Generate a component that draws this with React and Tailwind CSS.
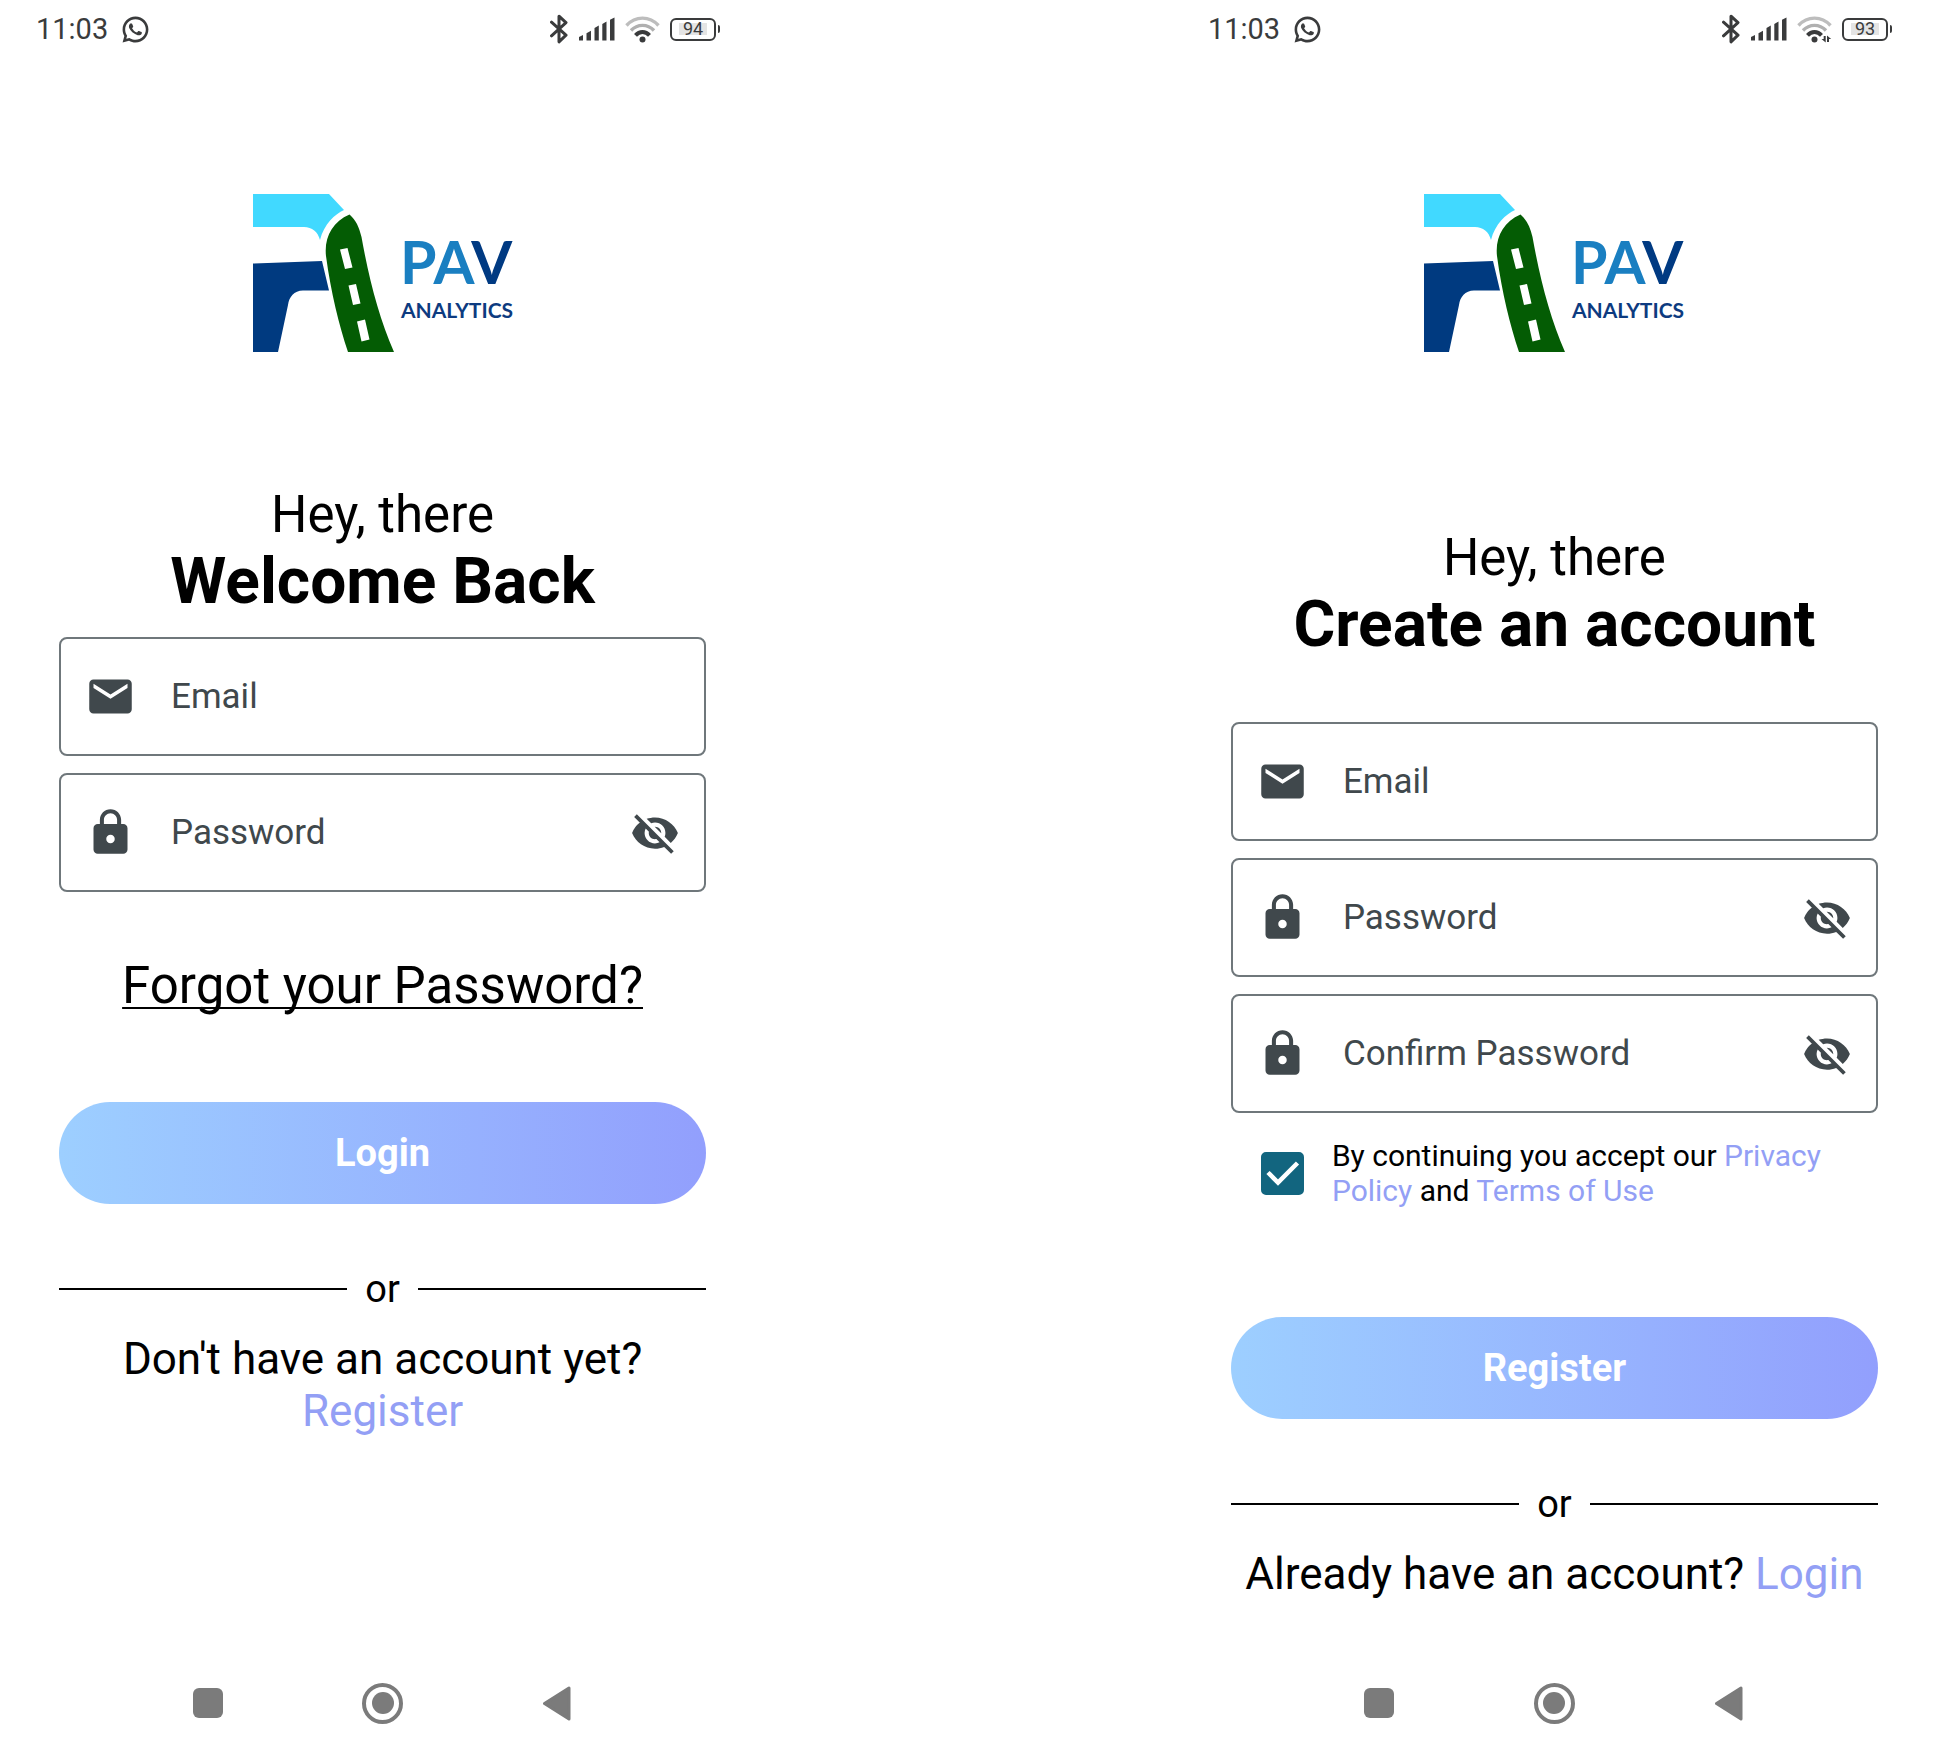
import { useState } from "react";
import { MdEmail, MdLock, MdVisibility, MdVisibilityOff } from "react-icons/md";
import { RiWhatsappLine } from "react-icons/ri";

function StatusBar({ battery, transferring }) {
  return (
    <header className="flex h-[58px] items-center justify-between pl-9 pr-[45px] text-[#3a3b3c]">
      <div className="flex items-center gap-3">
        <span className="text-[29px] leading-8">11:03</span>
        <RiWhatsappLine className="size-[31px]" aria-label="WhatsApp" />
      </div>
      <div className="flex items-center gap-[10px]">
        <svg className="h-[30px] w-[18px]" viewBox="0 0 18 30" fill="none" stroke="currentColor" strokeWidth="3" strokeLinejoin="round" strokeLinecap="round" aria-label="Bluetooth">
          <path d="M1.5 8.2 16 21.2 9 27.8V2.2L16 8.6 1.5 21.8" />
        </svg>
        <svg className="h-6 w-[37px]" viewBox="0 0 37 24" fill="currentColor" aria-label="Signal">
          <path d="M1 20 5 18V23.5H1ZM8.5 16.2 13 13.8V23.5H8.5ZM16.5 11 20.8 8.6V23.5H16.5ZM24.3 7 28.5 4.6V23.5H24.3ZM32 2.8 36.5 0.5V23.5H32Z" />
        </svg>
        <svg className="h-7 w-[35px]" viewBox="0 0 35 28" fill="none" stroke="currentColor" strokeWidth="3.4" aria-label="Wi-Fi">
          <path d="M1.5 10.5C10.5 0.7 24.5 0.7 33.5 10.5" stroke="#bdbdbd" />
          <path d="M6 15.5C12.5 8.6 22.5 8.6 29 15.5" stroke="#b0b0b0" />
          <path d="M10.5 20.3C14.5 15.9 20.5 15.9 24.5 20.3" strokeWidth="4" />
          <circle cx="17.5" cy="24.5" r="3" fill="currentColor" stroke="none" />
          {transferring && (
            <g fill="currentColor" stroke="none">
              <path d="M26.7 21H28.700V27.500L24.500 24H26.700Z" />
              <path d="M30 20.500 34.200 24H32V27H30Z" />
            </g>
          )}
        </svg>
        <div className="flex items-center gap-0.5">
          <div className="flex h-[23px] w-[46px] items-center justify-center rounded-md border-2 border-current">
            <span className="bg-[#e4e4e4] px-1 text-[18px] leading-3">{battery}</span>
          </div>
          <div className="h-2 w-0.5 rounded-r bg-current" />
        </div>
      </div>
    </header>
  );
}

function Logo() {
  return (
    <svg className="mx-auto h-[160px] w-[260px] overflow-visible" viewBox="253 194 260 160" role="img" aria-label="PAV Analytics">
      <path d="M253 194H329L344 210C335 214 324 224 320 240C318 232 312 227 304 227H253Z" fill="#41d9ff" />
      <path d="M253 263.5 322 261 329 290.5H303C294 290.5 289 297 288 305L278 352H253Z" fill="#003a80" />
      <path d="M349.5 214.5C356 220 359 227 361.5 237C369 279 379 318 394 352H348C339 325 331 293 326 256C324 238 332 222 349.5 214.5Z" fill="#045c04" />
      <path d="M340 249.5 347.5 248 352.5 267.5 345 269ZM348.5 285.5 356 284 360.5 303.5 353 305ZM357 321.5 365 319.5 369.5 339.5 361.5 341.5Z" fill="#fff" />
      <text x="400" y="284" fontFamily="Lato, sans-serif" fontWeight="700" fontSize="59" fill="#1a7fc1">
        PA<tspan fill="#003a82">V</tspan>
      </text>
      <text x="401" y="318" fontFamily="Lato, sans-serif" fontWeight="700" fontSize="21" fill="#0d3b80">
        ANALYTICS
      </text>
    </svg>
  );
}

function Heading({ title }) {
  return (
    <h1 className="text-center text-black">
      <span className="block text-[51px] leading-[60px]">Hey, there</span>
      <span className="block text-[64px] font-bold leading-[74px]">{title}</span>
    </h1>
  );
}

function Field({ id, label, icon: Icon, secret }) {
  const [visible, setVisible] = useState(false);
  const Eye = visible ? MdVisibility : MdVisibilityOff;
  return (
    <div className="flex h-[119px] items-center rounded-lg border-2 border-[#6f777b] pl-6 pr-6 text-[#40484c]">
      <label htmlFor={id} className="mr-[35px] shrink-0">
        <Icon className="size-[51px]" aria-label={label} />
      </label>
      <input
        id={id}
        type={secret && !visible ? "password" : "text"}
        placeholder={label}
        className="h-full min-w-0 flex-1 bg-transparent text-[35px] outline-none placeholder:text-[#40484c]"
      />
      {secret && (
        <button type="button" aria-label="Toggle visibility" onClick={() => setVisible(!visible)}>
          <Eye className="size-[50px]" />
        </button>
      )}
    </div>
  );
}

function GradientButton({ children }) {
  return (
    <button type="submit" className="h-[102px] w-full rounded-full bg-linear-to-r from-[#9dcfff] to-[#929ffd] text-[38px] font-bold text-white">
      {children}
    </button>
  );
}

function Divider() {
  return (
    <div className="mt-[61px] flex items-center gap-[18px] text-black">
      <div className="h-0.5 flex-1 bg-black" />
      <span className="text-[38px] leading-[48px]">or</span>
      <div className="h-0.5 flex-1 bg-black" />
    </div>
  );
}

function SwitchLine({ question, action }) {
  return (
    <p className="mt-5 text-center text-[44px] leading-[52px] text-black">
      {question} <a href="#" className="text-[#939ff5]">{action}</a>
    </p>
  );
}

function NavBar() {
  return (
    <nav className="mt-auto flex h-[100px] items-center justify-center gap-[127px] text-[#7b7b7b]">
      <button type="button" aria-label="Recents" className="flex w-12 justify-center">
        <span className="size-[30px] rounded-md bg-current" />
      </button>
      <button type="button" aria-label="Home" className="flex w-12 justify-center">
        <span className="flex size-[41px] items-center justify-center rounded-full border-4 border-current">
          <span className="size-[22px] rounded-full bg-current" />
        </span>
      </button>
      <button type="button" aria-label="Back" className="flex w-12 justify-center">
        <svg className="h-[35px] w-[29px]" viewBox="0 0 29 35" fill="currentColor" stroke="currentColor" strokeWidth="3" strokeLinejoin="round">
          <path d="M1.5 17.5 26 2V33Z" />
        </svg>
      </button>
    </nav>
  );
}

function Phone({ battery, transferring, children }) {
  return (
    <section className="flex min-h-screen w-[39.5%] flex-col">
      <StatusBar battery={battery} transferring={transferring} />
      <main className="px-[59px] pt-[136px]">
        <Logo />
        {children}
      </main>
      <NavBar />
    </section>
  );
}

function LoginScreen() {
  return (
    <Phone battery={94}>
      <form className="pt-[131px]" onSubmit={(e) => e.preventDefault()}>
        <Heading title="Welcome Back" />
        <div className="mt-[18px] flex flex-col gap-[17px]">
          <Field id="login-email" label="Email" icon={MdEmail} />
          <Field id="login-password" label="Password" icon={MdLock} secret />
        </div>
        <p className="mb-[86px] mt-16 text-center">
          <a href="#" className="text-[51px] leading-[60px] text-black underline decoration-2 underline-offset-4 [text-decoration-skip-ink:none]">
            Forgot your Password?
          </a>
        </p>
        <GradientButton>Login</GradientButton>
        <Divider />
        <SwitchLine question="Don't have an account yet?" action="Register" />
      </form>
    </Phone>
  );
}

function RegisterScreen() {
  return (
    <Phone battery={93} transferring>
      <form className="pt-[174px]" onSubmit={(e) => e.preventDefault()}>
        <Heading title="Create an account" />
        <div className="mt-[60px] flex flex-col gap-[17px]">
          <Field id="register-email" label="Email" icon={MdEmail} />
          <Field id="register-password" label="Password" icon={MdLock} secret />
          <Field id="register-confirm" label="Confirm Password" icon={MdLock} secret />
        </div>
        <div className="mb-[109px] mt-[25px] flex items-center gap-7 pl-[30px]">
          <span className="relative size-[43px] shrink-0">
            <input
              id="accept"
              type="checkbox"
              defaultChecked
              className="peer block size-full appearance-none rounded-[5px] border-4 border-[#12657f] checked:bg-[#12657f]"
            />
            <svg className="pointer-events-none absolute inset-0 hidden size-full peer-checked:block" viewBox="0 0 43 43" fill="none" stroke="#fff" strokeWidth="4.5">
              <path d="M7 20.5 17 30.5 36.5 11" />
            </svg>
          </span>
          <label htmlFor="accept" className="text-[30px] leading-[35px] text-black">
            By continuing you accept our <a href="#" className="text-[#939ff5]">Privacy Policy</a> and{" "}
            <a href="#" className="text-[#939ff5]">Terms of Use</a>
          </label>
        </div>
        <GradientButton>Register</GradientButton>
        <Divider />
        <SwitchLine question="Already have an account?" action="Login" />
      </form>
    </Phone>
  );
}

export default function App() {
  return (
    <div className="flex min-h-screen justify-between bg-white font-[Roboto,sans-serif]">
      <LoginScreen />
      <RegisterScreen />
    </div>
  );
}
